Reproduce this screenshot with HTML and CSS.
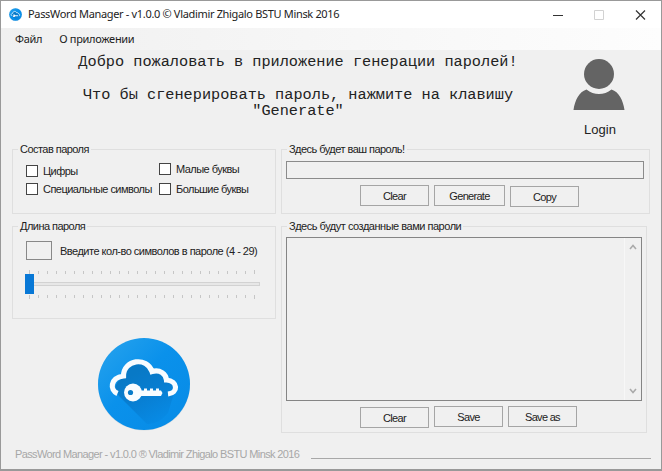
FILE: index.html
```html
<!DOCTYPE html>
<html lang="ru">
<head>
<meta charset="utf-8">
<title>PassWord Manager</title>
<link rel="stylesheet" href="styles.css">
</head>
<body>
<svg class="defs" width="0" height="0" aria-hidden="true">
  <defs>
    <linearGradient id="disc" x1="0" y1="0" x2="1" y2="1"><stop offset="0" stop-color="#29a4ed"/><stop offset=".45" stop-color="#0a91eb"/><stop offset="1" stop-color="#078be6"/></linearGradient>
    <linearGradient id="shade" gradientUnits="userSpaceOnUse" x1="40" y1="35" x2="66" y2="84"><stop offset="0" stop-color="#0879c6"/><stop offset=".4" stop-color="#087dd0"/><stop offset="1" stop-color="#078be6"/></linearGradient>
    <symbol id="logo" viewBox="0 0 94 94">
      <circle cx="47" cy="47.6" r="46" fill="#d7dde1"/>
      <circle cx="47" cy="47" r="46" fill="url(#disc)"/>
      <path d="M28 37 Q33 23 45 26 L53 35 Q63 32 68 42 Q77 45 78 53 L71 76 Q61 88 50 87 L22 59 Q14 49 24 42Z" fill="url(#shade)"/>
      <path d="M20.5 56.500 C12.500 53 13 41 26.500 39 C26.500 22.500 50 19.500 55 34.500 C63 32 69 37 69.500 43 C81 44 81.500 56 71 57" fill="none" stroke="#f8fcff" stroke-width="5.200"/>
      <circle cx="36" cy="55.500" r="9" fill="#f8fcff"/><circle cx="33.500" cy="55.500" r="2.600" fill="#087bc9"/>
      <path d="M43 53.500h4v-2h3v2h3v-2h3v2h3v-2h3v2h2l1.500 2.500-1.500 3H43Z" fill="#f8fcff"/>
    </symbol>
  </defs>
</svg>
<main class="window">
  <header class="titlebar">
    <svg class="app-icon"><use href="#logo"/></svg>
    <span class="title">PassWord Manager - v1.0.0 © Vladimir Zhigalo BSTU Minsk 2016</span>
    <svg class="controls" viewBox="0 0 94 12"><path d="M0 6.500h10" stroke="#333"/><path d="M41.500 1.500h9v9h-9z" fill="none" stroke="#d2d2d2"/><path d="M83 1.500l9 9m0-9l-9 9" stroke="#333" stroke-width="1.200"/></svg>
  </header>
  <nav class="menu"><span class="file">Файл</span><span class="about">О приложении</span></nav>
  <section class="intro">
    <div class="welcome">
      <p class="hello">Добро пожаловать в приложение генерации паролей!</p>
      <p>Что бы сгенерировать пароль, нажмите на клавишу<br>"Generate"</p>
    </div>
    <div class="login">
      <svg viewBox="0 0 52 52"><circle cx="26" cy="15" r="15" fill="#646464"/><path d="M.5 51C2 41 6 33 13.500 30.500C21 36.500 31 36.500 38.500 30.500C46 33 50 41 51.500 51Z" fill="#646464"/></svg>
      <span>Login</span>
    </div>
  </section>
  <div class="columns">
    <div class="left">
      <section class="group composition">
        <h2><span>Состав пароля</span></h2>
        <div class="checks">
          <div><label><i></i><span>Цифры</span></label><label><i></i><span>Специальные символы</span></label></div>
          <div class="second"><label><i></i><span>Малые буквы</span></label><label><i></i><span>Большие буквы</span></label></div>
        </div>
      </section>
      <section class="group length">
        <h2><span>Длина пароля</span></h2>
        <div class="count"><i></i><span>Введите кол-во символов в пароле (4 - 29)</span></div>
        <svg class="slider" viewBox="0 0 240 32">
          <path d="M4 2.500H232M4 26.500H232" stroke="#c6c6c6" stroke-width="3" stroke-dasharray="1 8"/>
          <path d="M4.500 0v4M229.500 0v4M4.500 25v4M229.500 25v4" stroke="#c6c6c6"/>
          <rect x="5.500" y="12.500" width="229" height="3" fill="#e7e7e7" stroke="#d2d2d2"/>
          <rect x="0" y="4" width="9" height="20" fill="#0878d6"/>
        </svg>
      </section>
      <svg class="logo"><use href="#logo"/></svg>
    </div>
    <div class="right">
      <section class="group result">
        <h2><span>Здесь будет ваш пароль!</span></h2>
        <div class="field"></div>
        <div class="buttons"><button>Clear</button><button class="wide">Generate</button><button class="low">Copy</button></div>
      </section>
      <section class="group history">
        <h2><span class="long">Здесь будут созданные вами пароли</span></h2>
        <div class="area">
          <div class="scroll"><svg viewBox="0 0 8 6"><path d="M1 5L4 1.500 7 5"/></svg><svg viewBox="0 0 8 6"><path d="M1 1L4 4.500 7 1"/></svg></div>
        </div>
        <div class="buttons bottom"><button class="low">Clear</button><button>Save</button><button>Save as</button></div>
      </section>
    </div>
  </div>
  <footer><span>PassWord Manager - v1.0.0 ® Vladimir Zhigalo BSTU Minsk 2016</span><hr></footer>
</main>
</body>
</html>
```
FILE: styles.css
```css
* { box-sizing: border-box; }
body { margin: 0; overflow: hidden; }
.defs { position: absolute; }
.window { width: 662px; height: 471px; border: 1px solid #999; border-bottom-width: 2px; background: #f0f0f0; color: #222; font: 11px/14px "Liberation Sans", sans-serif; display: flex; flex-direction: column; }
.window svg { display: block; flex: none; }
span { white-space: nowrap; }
.titlebar { height: 27px; background: #fff; display: flex; align-items: center; padding-left: 8px; font: 11px/16px "Noto Sans", sans-serif; }
.titlebar .app-icon { width: 13px; height: 13px; }
.title { margin-left: 6px; letter-spacing: -.33px; position: relative; top: -1px; }
.titlebar .controls { width: 94px; height: 12px; margin-left: auto; margin-right: 14px; }
.menu { height: 22px; display: flex; align-items: center; padding-left: 14px; gap: 17px; background: linear-gradient(90deg, #f0f0f0, #fdfdfd); font: 11px/16px "Noto Sans", sans-serif; letter-spacing: -.3px; }
.intro { height: 99px; display: flex; }
.welcome { margin-left: 73px; width: 448px; padding-top: 4px; text-align: center; font: 15.250px/16.500px "Liberation Mono", "Courier New", monospace; white-space: nowrap; }
.welcome p { margin: 0; }
.welcome .hello { margin-bottom: 16px; }
.login { margin-left: 50px; width: 54px; padding-top: 9px; display: flex; flex-direction: column; align-items: center; font-size: 13px; line-height: 16px; }
.login svg { width: 52px; height: 52px; }
.login span { margin: 11px 0 0 2px; }
.columns { height: 289px; display: flex; gap: 5px; padding-left: 11px; letter-spacing: -.54px; }
.left { width: 264px; }
.group { border: 1px solid #dfdfdf; }
h2 { margin: -8px 0 0 5px; font: inherit; height: 14px; }
h2 span { display: inline-block; background: #f0f0f0; padding: 0 2px; }
.long { letter-spacing: -.48px; }
.composition { height: 65px; }
.checks { display: flex; padding-left: 13px; }
.checks > div { width: 133px; flex: none; padding-top: 9px; }
.checks .second { width: 110px; padding-top: 7px; }
label { display: flex; align-items: center; gap: 5px; height: 12px; margin-bottom: 6px; }
.second label { margin-bottom: 8px; }
label i { width: 12px; height: 12px; flex: none; border: 1px solid #444; background: #fff; }
.length { height: 93px; margin-top: 12px; }
.count { display: flex; align-items: center; gap: 8px; margin: 8px 0 0 13px; letter-spacing: -.5px; }
.count i { width: 26px; height: 19px; border: 1px solid #888; flex: none; }
.slider { width: 240px; height: 32px; margin: 10px 0 0 12px; }
.logo { width: 94px; height: 94px; margin: 18px 0 0 85px; }
.right { width: 369px; }
.result { height: 65px; }
.field { height: 18px; margin: 5px 5px 0 4px; border: 1px solid #8b8b8b; }
.buttons { display: flex; gap: 5px; margin: 6px 0 0 78px; }
button { width: 69px; height: 21px; padding: 0; border: 1px solid #a5a5a5; border-radius: 0; background: #f0f0f0; color: #222; font: 11px/14px "Liberation Sans", sans-serif; letter-spacing: -.7px; }
button.wide { width: 71px; }
.low { position: relative; top: 1px; }
.history { width: 366px; height: 207px; margin-top: 12px; }
.area { height: 164px; margin: 4px 4px 0; border: 1px solid #858585; display: flex; justify-content: flex-end; }
.scroll { width: 17px; border-left: 1px solid #f7f7f7; padding: 6px 4px; display: flex; flex-direction: column; justify-content: space-between; }
.scroll svg { width: 8px; height: 6px; fill: none; stroke: #aaa; stroke-width: 1.600; }
.buttons.bottom { margin-top: 5px; }
footer { flex: 1; display: flex; padding: 9px 10px 0 14px; font-size: 11px; color: #a7a7a7; }
footer span { width: 286px; letter-spacing: -.62px; }
hr { width: 340px; height: 1px; border: 0; margin: 11px 0 0 auto; background: #a8a8a8; }
```
